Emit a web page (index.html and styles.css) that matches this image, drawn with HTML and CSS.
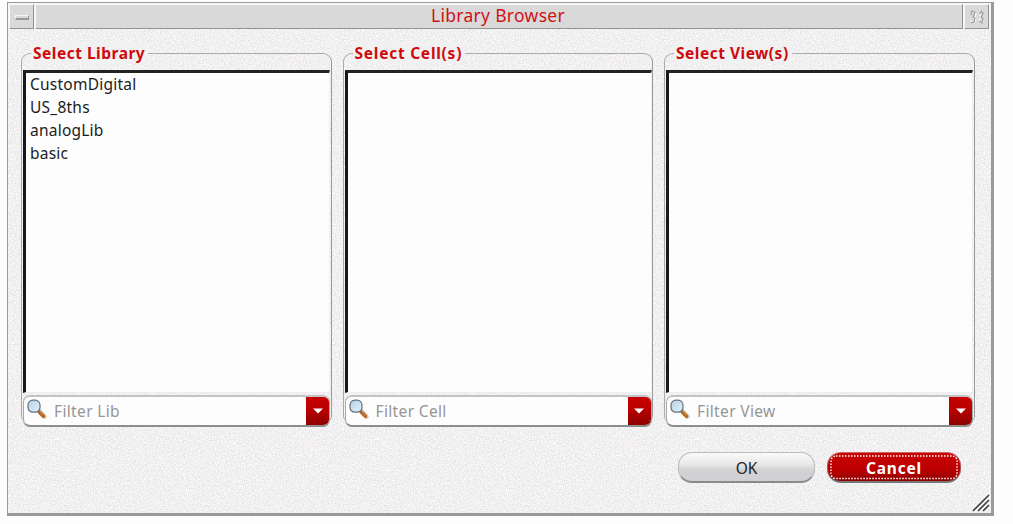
FILE: index.html
```html
<!DOCTYPE html>
<html lang="en">
<head>
<meta charset="utf-8">
<title>Library Browser</title>
<link rel="stylesheet" href="styles.css">
</head>
<body>
<svg class="defs" width="0" height="0" aria-hidden="true">
  <defs>
    <linearGradient id="lens" x1="0" y1="0" x2="1" y2="1"><stop offset="0" stop-color="#b5cfe6"/><stop offset="1" stop-color="#e3f2fc"/></linearGradient>
    <symbol id="search" viewBox="0 0 20 21">
      <path d="M12 12l5.2 5.5" stroke="#d9cfc8" stroke-width="5" stroke-linecap="round"/>
      <path d="M11.5 12.5l1.4 1.2" stroke="#59636c" stroke-width="2.5"/>
      <path d="M13 13.7l3.6 3.5" stroke="#b8651c" stroke-width="3.4" stroke-linecap="round"/>
      <path d="M13.5 13.5l3 2.8" stroke="#dc9044" stroke-width="1"/>
      <rect x="1" y="1.2" width="12" height="12" rx="4.8" fill="url(#lens)" stroke="#65707a" stroke-width="1.2"/>
    </symbol>
  </defs>
</svg>
<main class="window">
  <svg class="texture" aria-hidden="true">
    <filter id="grain" x="0" y="0" width="100%" height="100%" color-interpolation-filters="sRGB">
      <feTurbulence type="fractalNoise" baseFrequency=".8" numOctaves="2" seed="4"/>
      <feColorMatrix values=".28 0 0 0 .805  .18 .1 0 0 .802  .18 0 .1 0 .805  0 0 0 0 1"/>
    </filter>
    <rect width="100%" height="100%" filter="url(#grain)"/>
  </svg>
  <header class="titlebar">
    <div class="bevel control"><span class="minimize"></span></div>
    <h1 class="bevel title"><span>Library Browser</span></h1>
    <div class="bevel control">
      <svg width="16" height="16" viewBox="0 0 16 16" fill="none" stroke-width="1.1"><path stroke="#fafafa" d="M2 4l3-2 2 3-1 3 1 3-3 3-2-2M14 3l-3-1-1 3 2 3-2 3 2 3 3-2"/><path stroke="#999" d="M2 6l1-4 3 1-1 3-1 2 2 1-1 4-3 1M10 5l2-3 2 2-1 3-1 1 2 2-1 4-3-2"/></svg>
    </div>
  </header>
  <div class="columns">
    <section class="group">
      <h2 class="legend"><span>Select Library</span></h2>
      <ul class="list">
        <li>CustomDigital</li>
        <li>US_8ths</li>
        <li>analogLib</li>
        <li>basic</li>
      </ul>
      <div class="combo">
        <svg class="search" width="20" height="21"><use href="#search"/></svg>
        <span class="hint">Filter Lib</span>
        <span class="drop"><svg width="10" height="6" viewBox="0 0 10 6"><path d="M0 .5h10L5 5.5z" fill="#fff"/></svg></span>
      </div>
    </section>
    <section class="group">
      <h2 class="legend cells"><span>Select Cell(s)</span></h2>
      <ul class="list"></ul>
      <div class="combo">
        <svg class="search" width="20" height="21"><use href="#search"/></svg>
        <span class="hint">Filter Cell</span>
        <span class="drop"><svg width="10" height="6" viewBox="0 0 10 6"><path d="M0 .5h10L5 5.5z" fill="#fff"/></svg></span>
      </div>
    </section>
    <section class="group">
      <h2 class="legend views"><span>Select View(s)</span></h2>
      <ul class="list"></ul>
      <div class="combo">
        <svg class="search" width="20" height="21"><use href="#search"/></svg>
        <span class="hint">Filter View</span>
        <span class="drop"><svg width="10" height="6" viewBox="0 0 10 6"><path d="M0 .5h10L5 5.5z" fill="#fff"/></svg></span>
      </div>
    </section>
  </div>
  <footer class="actions">
    <button class="button ok">OK</button>
    <button class="button cancel">
      <svg class="focus" width="128" height="25"><rect x="1" y="1" width="126" height="22.5" rx="5" fill="none" stroke="#fff" stroke-width="1.4" stroke-dasharray="1.5 1.5"/></svg>
      <span>Cancel</span>
    </button>
  </footer>
  <svg class="grip" width="18" height="18" viewBox="0 0 18 18" fill="none"><path d="M1 17L17 1M6 17L17 6M11 17l6-6" stroke="#444" stroke-width="1.7"/><path d="M3 17.5L17.5 3M8 17.5l9.5-9.5" stroke="#fff"/></svg>
</main>
</body>
</html>
```
FILE: styles.css
```css
* { box-sizing: border-box; }
body {
  margin: 0;
  height: 524px;
  overflow: hidden;
  padding: 2px 0 0 7px;
  background: #fdfdfd;
  font-family: "Noto Sans", "Open Sans", sans-serif;
  color: #1c1c1c;
}
.defs { position: absolute; }
.window {
  position: relative;
  display: flex;
  flex-direction: column;
  width: 987px;
  height: 514px;
  border: 1px solid #999;
  border-right: 3px solid #9a9a9a;
  border-bottom: 3px solid #999;
  background: #eee;
  isolation: isolate;
}
.texture { position: absolute; inset: 0; width: 100%; height: 100%; z-index: -1; }
.titlebar {
  display: flex;
  gap: 1px;
  height: 26px;
  padding: 1px 2px 0 1px;
  background: #f5f5f5;
}
.bevel {
  background: #d9d9d9;
  border: 1px solid #f8f8f8;
  border-right-color: #929292;
  border-bottom-color: #929292;
}
.control { display: flex; align-items: center; justify-content: center; width: 25px; }
.minimize {
  width: 14px;
  height: 5px;
  margin-top: 2px;
  border: 1px solid #f8f8f8;
  border-right-color: #999;
  border-bottom: 2px solid #999;
}
.title {
  flex: 1;
  margin: 0;
  padding-right: 2px;
  color: #cf1216;
  font-size: 17.5px;
  font-weight: 400;
  line-height: 20px;
  text-align: center;
}
.title span { letter-spacing: .3px; }
.columns {
  display: grid;
  grid-template-columns: 310.5px 310.5px 310.5px;
  gap: 11px;
  padding: 13px 0 0 13px;
}
.group {
  position: relative;
  display: flex;
  flex-direction: column;
  height: 385px;
  padding: 28px 1.5px 0 2px;
}
.group::before {
  content: "";
  position: absolute;
  inset: 11px 0 6px 0;
  border: 1px solid #aaa;
  border-right-color: #999;
  border-bottom: 0;
  border-radius: 9px 9px 5px 5px;
  pointer-events: none;
}
.legend {
  position: absolute;
  top: -1px;
  left: 10px;
  margin: 0;
  padding: 1px 3px 0 2px;
  background: #f1f1f1;
  color: #ce0a0e;
  font-size: 15.5px;
  font-weight: 700;
  line-height: 22px;
  letter-spacing: .5px;
  white-space: nowrap;
}
.cells { letter-spacing: .75px; }
.list {
  height: 323px;
  margin: 0;
  padding: 0 0 0 4px;
  border: 3px solid #181818;
  border-top-color: #222;
  border-right: 1px solid #f0f0f0;
  border-bottom: 1px solid #eee;
  background: #fdfdfd;
  list-style: none;
  font-size: 15.5px;
  line-height: 23px;
  letter-spacing: .23px;
}
.combo {
  display: flex;
  height: 32px;
  margin-top: 2px;
  border: 1px solid #aaa;
  border-top: 2px solid #c4c4c4;
  border-bottom: 2px solid #8d8d8d;
  border-radius: 7px;
  background: #fdfdfd;
  overflow: hidden;
}
.search { margin: 2px 0 0 3px; }
.hint { flex: 1; padding-left: 7px; color: #969696; font-size: 15.5px; line-height: 29px; letter-spacing: .35px; }
.drop {
  display: flex;
  align-items: center;
  justify-content: center;
  width: 23px;
  background: linear-gradient(#c80000, #b90000 45%, #8d0000);
}
.actions { display: flex; gap: 12px; padding: 25px 0 0 670px; }
.button {
  height: 31px;
  padding: 1px 0 0;
  border: 1px solid #bbb;
  border-bottom: 2px solid #8a8a8a;
  border-radius: 14px;
  font-family: inherit;
  font-size: 15.5px;
  color: #222;
}
.ok { width: 137px; background: linear-gradient(#fafafa, #e9e9e9 40%, #d2d1d4 60%, #d0cfd3); }
.cancel {
  display: grid;
  place-items: center;
  width: 134px;
  padding: 0;
  border-color: #c66 #a55 #777;
  background: linear-gradient(#c90000, #bc0000 60%, #8e0000);
  color: #fff;
  font-weight: 700;
  letter-spacing: .8px;
}
.cancel > * { grid-area: 1 / 1; }
.cancel span { padding-top: 1px; }
.grip { position: absolute; right: 1px; bottom: 1px; }
```
